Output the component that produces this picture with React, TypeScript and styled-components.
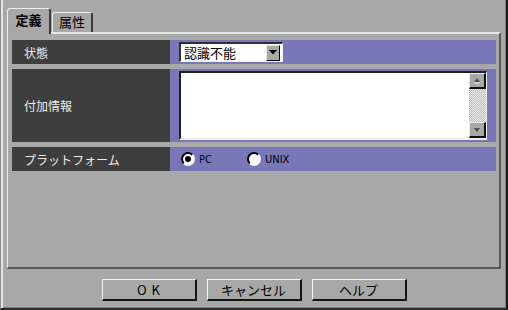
import React from 'react';
import styled, { createGlobalStyle } from 'styled-components';

const GlobalStyle = createGlobalStyle`
  html, body {
    margin: 0;
    padding: 0;
    background: #a8a8a8;
  }
  body {
    font-family: "Noto Sans CJK JP", "Noto Sans", sans-serif;
  }
`;

const Window = styled.div`
  width: 508px;
  height: 310px;
  box-sizing: border-box;
  background: #a8a8a8;
  border-left: 1px solid #8c8c8c;
  border-right: 2px solid #1c1c1c;
  border-bottom: 2px solid #2c2c2c;
  box-shadow: inset 2px 0 0 #e4e4e4, inset 0 -1px 0 #7c7c7c, inset -1px 0 0 #7c7c7c;
  padding: 8px 5px 0 6px;
  display: flex;
  flex-direction: column;
`;

const TabBar = styled.div`
  display: flex;
  align-items: flex-end;
  height: 24px;
  gap: 1px;
`;

const Tab = styled.div<{ $active?: boolean }>`
  position: relative;
  z-index: ${(p) => (p.$active ? 1 : 0)};
  box-sizing: border-box;
  width: ${(p) => (p.$active ? 44 : 41)}px;
  height: ${(p) => (p.$active ? 26 : 20)}px;
  margin-bottom: ${(p) => (p.$active ? -2 : 0)}px;
  background: #a8a8a8;
  border-top: 1px solid #ececec;
  border-left: 1px solid #ececec;
  border-right: 2px solid #3c3c3c;
  border-radius: 3px 3px 0 0;
  display: flex;
  justify-content: center;
  padding-top: ${(p) => (p.$active ? 3 : 1)}px;
  font-size: 13px;
  line-height: 16px;
  font-weight: ${(p) => (p.$active ? 700 : 400)};
  color: #000;
`;

const Panel = styled.div`
  height: 237px;
  box-sizing: border-box;
  border-top: 2px solid #e8e8e8;
  border-left: 1px solid #e8e8e8;
  border-right: 2px solid #585858;
  border-bottom: 2px solid #585858;
  padding: 6px 3px 0 4px;
`;

const Form = styled.div`
  display: grid;
  grid-template-columns: 158px 1fr;
  grid-template-rows: 24px 73px 24px;
  row-gap: 5px;
`;

const Label = styled.div`
  background: #3e3e3e;
  color: #ececec;
  font-size: 12px;
  padding-left: 12px;
  display: flex;
  align-items: center;
`;

const Value = styled.div`
  background: #7878b8;
  display: flex;
  align-items: center;
  padding-left: 9px;
`;

const Select = styled.div`
  box-sizing: border-box;
  width: 104px;
  height: 20px;
  background: #fff;
  border-top: 2px solid #303030;
  border-left: 2px solid #303030;
  border-bottom: 1px solid #f4f4f4;
  border-right: 1px solid #f4f4f4;
  display: flex;
  align-items: center;
  justify-content: space-between;
  padding: 0 2px 0 3px;
  font-size: 13px;
  color: #000;
`;

const DropButton = styled.div`
  box-sizing: border-box;
  width: 14px;
  height: 16px;
  background: #a8a8a8;
  border-top: 1px solid #e8e8e8;
  border-left: 1px solid #e8e8e8;
  border-right: 1px solid #000;
  border-bottom: 1px solid #000;
  display: flex;
  align-items: center;
  justify-content: center;
`;

const TextArea = styled.div`
  box-sizing: border-box;
  width: 308px;
  height: 69px;
  background: #fff;
  border-top: 2px solid #202020;
  border-left: 2px solid #202020;
  border-bottom: 2px solid #f0f0f0;
  border-right: 1px solid #f0f0f0;
  display: flex;
  justify-content: flex-end;
`;

const ScrollBar = styled.div`
  width: 17px;
  display: flex;
  flex-direction: column;
  background: repeating-conic-gradient(#bcbcbc 0 25%, #ececec 0 50%) 0 0 / 2px 2px;
`;

const ScrollButton = styled.div`
  box-sizing: border-box;
  height: 16px;
  background: #a8a8a8;
  border-top: 1px solid #e8e8e8;
  border-left: 1px solid #e8e8e8;
  border-right: 2px solid #101010;
  border-bottom: 2px solid #101010;
  display: flex;
  align-items: center;
  justify-content: center;
`;

const Track = styled.div`
  flex: 1;
`;

const RadioGroup = styled.div`
  display: flex;
  align-items: center;
  padding-left: 2px;
`;

const RadioOption = styled.label`
  display: flex;
  align-items: center;
  gap: 4px;
  width: 66px;
  font-family: "DejaVu Sans Condensed", "DejaVu Sans", sans-serif;
  font-size: 11px;
  color: #000;
`;

const RadioDot = styled.span<{ $checked?: boolean }>`
  box-sizing: border-box;
  width: 14px;
  height: 14px;
  border-radius: 50%;
  background: #fff;
  border: 2px solid;
  border-color: #000 #f4f4f4 #f4f4f4 #000;
  display: flex;
  align-items: center;
  justify-content: center;
  &::after {
    content: '';
    width: 6px;
    height: 6px;
    border-radius: 50%;
    background: ${(p) => (p.$checked ? '#000' : 'transparent')};
  }
`;

const ButtonBar = styled.div`
  display: flex;
  justify-content: center;
  gap: 10px;
  margin-top: 10px;
`;

const Button = styled.button<{ $spaced?: boolean }>`
  box-sizing: border-box;
  width: 95px;
  height: 22px;
  margin: 0;
  padding: 0 0 0 ${(p) => (p.$spaced ? 5 : 0)}px;
  background: #a8a8a8;
  border-top: 1px solid #f4f4f4;
  border-left: 1px solid #f4f4f4;
  border-right: 2px solid #141414;
  border-bottom: 2px solid #141414;
  border-radius: 0;
  font-family: "Noto Sans CJK JP", "Noto Sans", sans-serif;
  font-size: 13px;
  letter-spacing: ${(p) => (p.$spaced ? 5 : 0)}px;
  color: #000;
`;

const Arrow = ({ up }: { up?: boolean }) => (
  <svg width="8" height="6" viewBox="0 0 8 6">
    {up ? (
      <>
        <path d="M4 0 L7 4 L1 4 Z" fill="#505050" />
        <path d="M1 5 H7" stroke="#f4f4f4" strokeWidth="1" />
      </>
    ) : (
      <path d="M1 1 L7 1 L4 5 Z" fill="#505050" />
    )}
  </svg>
);

export default function App() {
  return (
    <>
      <GlobalStyle />
      <Window>
        <TabBar>
          <Tab $active>定義</Tab>
          <Tab>属性</Tab>
        </TabBar>
        <Panel>
          <Form>
            <Label>状態</Label>
            <Value>
              <Select>
                <span>認識不能</span>
                <DropButton>
                  <svg width="8" height="5" viewBox="0 0 8 5">
                    <path d="M0 0 H8 L4 4.5 Z" fill="#000" />
                  </svg>
                </DropButton>
              </Select>
            </Value>

            <Label>付加情報</Label>
            <Value>
              <TextArea>
                <ScrollBar>
                  <ScrollButton>
                    <Arrow up />
                  </ScrollButton>
                  <Track />
                  <ScrollButton>
                    <Arrow />
                  </ScrollButton>
                </ScrollBar>
              </TextArea>
            </Value>

            <Label>プラットフォーム</Label>
            <Value>
              <RadioGroup>
                <RadioOption>
                  <RadioDot $checked />
                  PC
                </RadioOption>
                <RadioOption>
                  <RadioDot />
                  UNIX
                </RadioOption>
              </RadioGroup>
            </Value>
          </Form>
        </Panel>
        <ButtonBar>
          <Button $spaced>OK</Button>
          <Button>キャンセル</Button>
          <Button>ヘルプ</Button>
        </ButtonBar>
      </Window>
    </>
  );
}
